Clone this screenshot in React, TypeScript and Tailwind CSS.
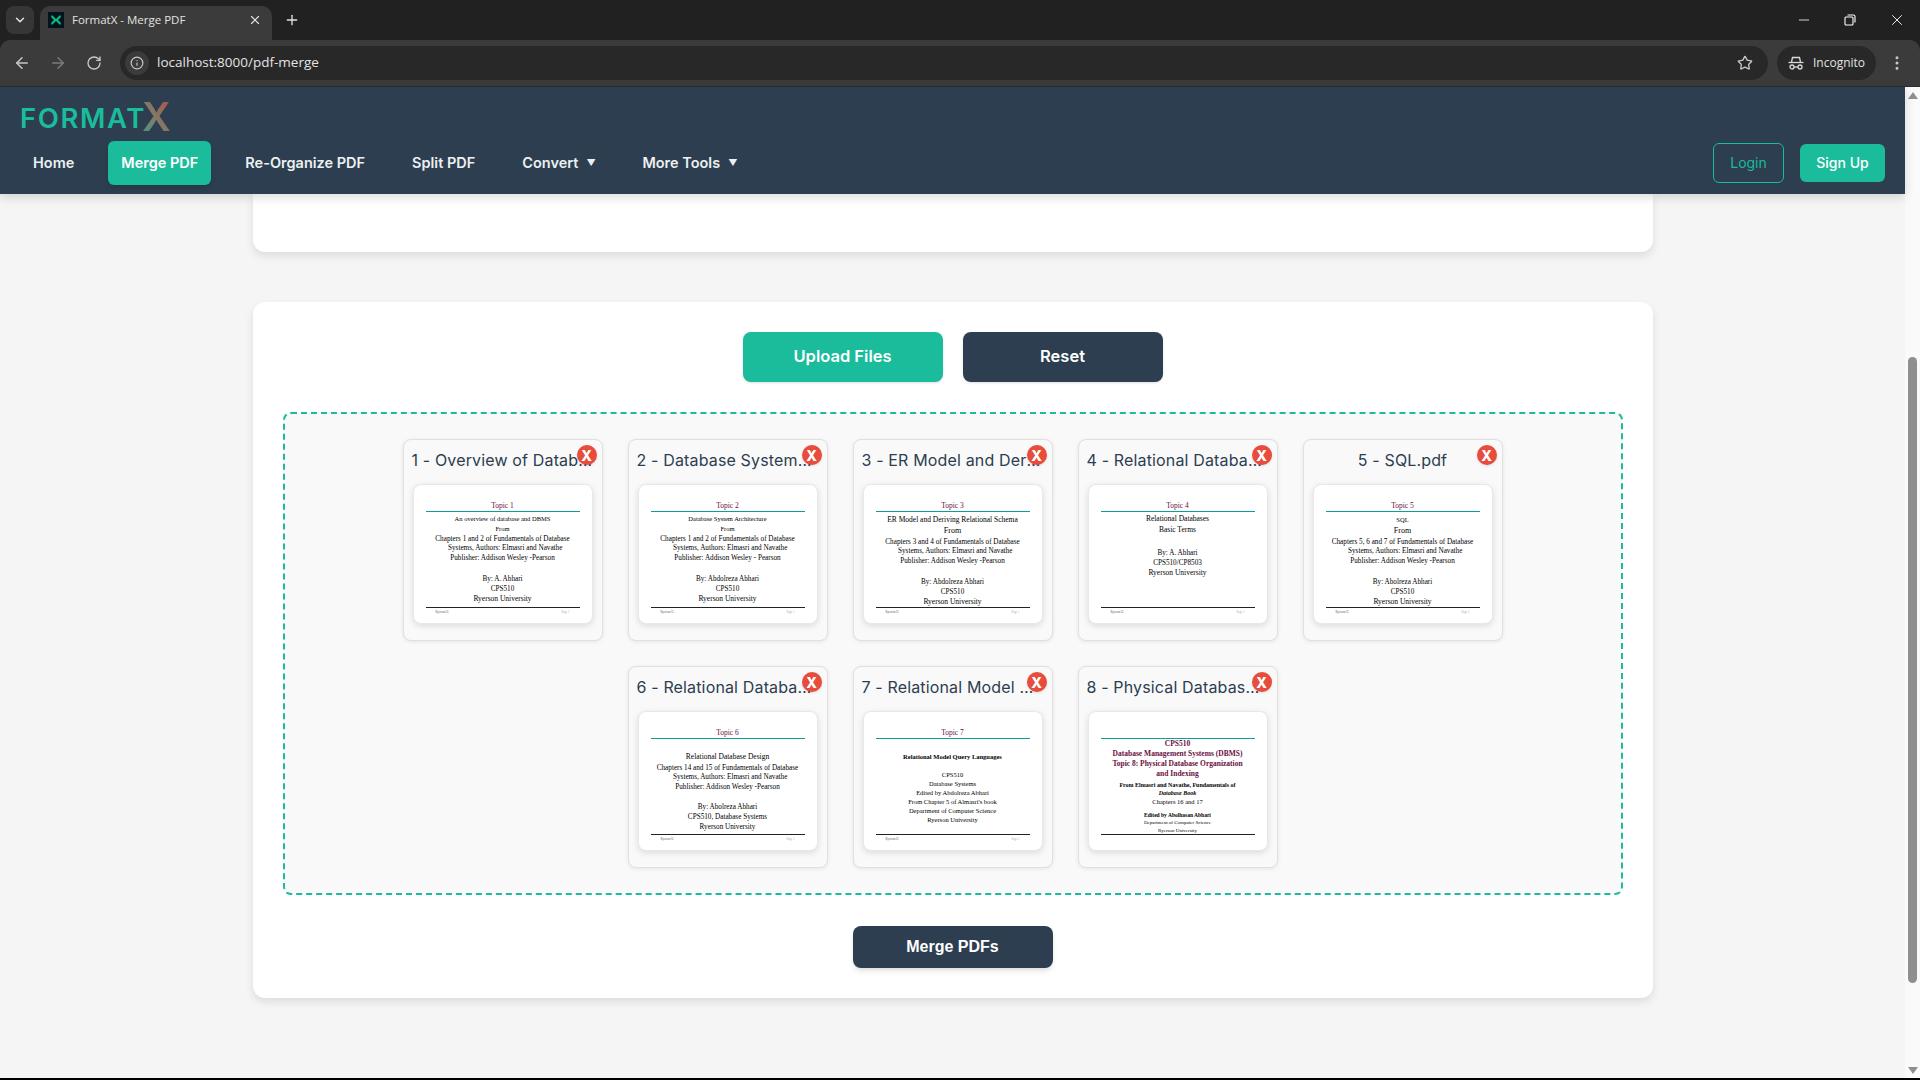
import clsx from 'clsx'
import { ArrowLeft, ArrowRight, ChevronDown, Info, Minus, MoreVertical, Plus, RotateCw, Star, X } from 'lucide-react'

type Line = [string, string]

interface Slide {
  file: string
  topic?: string
  lines: Line[]
  footer?: boolean
}

const small = 'text-[6.5px] leading-[10px]'
const body = 'text-[7.2px] leading-[10px]'
const tight = 'text-[7.2px] leading-[9px]'
const big = 'text-[7.5px] leading-[10px]'
const gap = 'h-[10px]'
const title = 'text-[7.5px] leading-[10px] font-bold text-[#6b0f3f]'

const slides: Slide[] = [
  {
    file: '1 - Overview of Database Systems.pdf',
    topic: 'Topic 1',
    lines: [
      ['', 'h-[2px]'],
      ['An overview of database and DBMS', small],
      ['From', small],
      ['Chapters 1 and 2 of Fundamentals of Database', body],
      ['\u00a0\u00a0\u00a0Systems, Authors: Elmasri and Navathe', tight],
      ['Publisher: Addison Wesley -Pearson', body],
      ['', 'h-[11px]'],
      ['By: A. Abhari', body],
      ['CPS510', body],
      ['Ryerson University', big],
    ],
  },
  {
    file: '2 - Database Systems Architecture.pdf',
    topic: 'Topic 2',
    lines: [
      ['', 'h-[2px]'],
      ['Database System Architecture', small],
      ['From', small],
      ['Chapters 1 and 2 of Fundamentals of Database', body],
      ['\u00a0\u00a0\u00a0Systems, Authors: Elmasri and Navathe', tight],
      ['Publisher: Addison Wesley - Pearson', body],
      ['', 'h-[11px]'],
      ['By: Abdolreza Abhari', body],
      ['CPS510', body],
      ['Ryerson University', big],
    ],
  },
  {
    file: '3 - ER Model and Deriving Relational Schema.pdf',
    topic: 'Topic 3',
    lines: [
      ['', 'h-[3px]'],
      ['ER Model and Deriving Relational Schema', big],
      ['From', 'text-[8px] leading-[12px]'],
      ['Chapters 3 and 4 of Fundamentals of Database', body],
      ['\u00a0\u00a0\u00a0Systems, Authors: Elmasri and Navathe', tight],
      ['Publisher: Addison Wesley -Pearson', body],
      ['', 'h-[11px]'],
      ['By: Abdolreza Abhari', body],
      ['CPS510', body],
      ['Ryerson University', big],
    ],
  },
  {
    file: '4 - Relational Database Basic Terms.pdf',
    topic: 'Topic 4',
    lines: [
      ['', 'h-[2px]'],
      ['Relational Databases', big],
      ['Basic Terms', 'text-[7.5px] leading-[12px]'],
      ['', 'h-[12px]'],
      ['By: A. Abhari', body],
      ['CPS510/CP8503', body],
      ['Ryerson University', big],
    ],
  },
  {
    file: '5 - SQL.pdf',
    topic: 'Topic 5',
    lines: [
      ['', 'h-[3px]'],
      ['SQL', small],
      ['From', 'text-[8px] leading-[12px]'],
      ['Chapters 5, 6 and 7 of Fundamentals of Database', body],
      ['\u00a0\u00a0\u00a0Systems, Authors: Elmasri and Navathe', tight],
      ['Publisher: Addison Wesley -Pearson', body],
      ['', 'h-[11px]'],
      ['By: Abolreza Abhari', body],
      ['CPS510', body],
      ['Ryerson University', big],
    ],
  },
  {
    file: '6 - Relational Database Design.pdf',
    topic: 'Topic 6',
    lines: [
      ['', 'h-[12px]'],
      ['Relational Database Design', 'text-[7.5px] leading-[12px]'],
      ['Chapters 14 and 15 of Fundamentals of Database', body],
      ['\u00a0\u00a0\u00a0Systems, Authors: Elmasri and Navathe', tight],
      ['Publisher: Addison Wesley -Pearson', body],
      ['', gap],
      ['By: Abolreza Abhari', body],
      ['CPS510, Database Systems', body],
      ['Ryerson University', body],
    ],
  },
  {
    file: '7 - Relational Model Query Languages.pdf',
    topic: 'Topic 7',
    lines: [
      ['', 'h-[13px]'],
      ['Relational Model Query Languages', 'text-[6.5px] leading-[10px] font-bold'],
      ['', 'h-[8px]'],
      ['CPS510', 'text-[6.5px] leading-[9px]'],
      ['Database Systems', 'text-[6.5px] leading-[9px]'],
      ['Edited by Abdolreza Abhari', 'text-[6.5px] leading-[9px]'],
      ["From Chapter 5 of Almasri's book", 'text-[6.5px] leading-[9px]'],
      ['Department of Computer Science', 'text-[6.5px] leading-[9px]'],
      ['Ryerson University', 'text-[6.5px] leading-[9px]'],
    ],
  },
  {
    file: '8 - Physical Database Organization.pdf',
    footer: false,
    lines: [
      ['CPS510', title],
      ['Database Management Systems (DBMS)', title],
      ['Topic 8: Physical Database Organization', title],
      ['and Indexing', title],
      ['', 'h-[2px]'],
      ['From Elmasri and Navathe, Fundamentals of', 'text-[6px] leading-[8px] font-bold'],
      ['Database Book', 'text-[6px] leading-[8px] italic font-bold'],
      ['Chapters 16 and 17', 'text-[6.5px] leading-[9px]'],
      ['', 'h-[5px]'],
      ['Edited by Abolhasan Abhari', 'text-[5.5px] leading-[8px] font-bold'],
      ['Department of Computer Science', 'text-[5px] leading-[8px]'],
      ['Ryerson University', 'text-[5px] leading-[7px]'],
    ],
  },
]

function Thumb({ slide }: { slide: Slide }) {
  return (
    <div className="w-[180px] h-[140px] mx-auto rounded-lg bg-white border border-[#e8e8e8] shadow-[0_2px_6px_rgba(0,0,0,0.12)] px-[12px] pt-[14px] font-['Liberation_Serif',serif] text-black overflow-hidden">
      <div className="h-[13px] flex items-end justify-center border-b border-[#0f9d9a] text-[7.5px] leading-[10px] text-[#6b0f3f]">
        {slide.topic ?? ''}
      </div>
      <div className="h-[95px] overflow-hidden text-center whitespace-nowrap">
        {slide.lines.map((l, i) => (
          <div key={i} className={l[1]}>{l[0]}</div>
        ))}
      </div>
      <div className="border-t border-[#222]">
        {slide.footer !== false && (
          <div className="flex justify-between px-[10px] text-[3px] leading-[8px] text-[#555]">
            <span>Ryerson U.</span>
            <span className="text-[#aaa]">Page 1</span>
          </div>
        )}
      </div>
    </div>
  )
}

function FileCard({ slide }: { slide: Slide }) {
  return (
    <div className="relative w-[200px] h-[202px] rounded-lg bg-[#f9f9f9] border border-[#e0e0e0] shadow-[0_1px_4px_rgba(0,0,0,0.08)] pt-2 px-2">
      <div className="truncate text-center text-base leading-6 tracking-[0.15px] text-[#2c3e50] mb-[12px]">{slide.file}</div>
      <Thumb slide={slide} />
      <div className="absolute top-[5px] right-[5px] w-5 h-5 rounded-full bg-[#e74c3c] flex items-center justify-center text-white text-[14px] font-extrabold shadow-sm">
        X
      </div>
    </div>
  )
}

function NavLink({ label, active, caret }: { label: string; active?: boolean; caret?: boolean }) {
  return (
    <div
      className={clsx(
        'h-11 px-[13px] flex items-center rounded-md text-[14.5px] font-semibold',
        active ? 'bg-[#1abc9c] text-white shadow-md' : 'text-[#ecf0f1]',
      )}
    >
      {label}
      {caret && <span className="ml-2 w-[9px] text-center text-[9px]">▼</span>}
    </div>
  )
}

function IncognitoIcon() {
  return (
    <svg width="16" height="14" viewBox="0 0 16 14" fill="none" stroke="#d8d8d8" strokeWidth="1.3">
      <path d="M3.5 6l1-4.5h7l1 4.5" />
      <path d="M0.5 6.5h15" />
      <circle cx="4" cy="11" r="2" />
      <circle cx="12" cy="11" r="2" />
      <path d="M6 11h4" />
    </svg>
  )
}

function BrowserChrome() {
  return (
    <div className="shrink-0 bg-[#202120] font-['Open_Sans',sans-serif]">
      <div className="h-10 flex items-end text-[#e3e3e3]">
        <div className="ml-[6px] mb-[6px] w-7 h-7 rounded-lg bg-[#363636] flex items-center justify-center">
          <ChevronDown size={14} strokeWidth={2.5} />
        </div>
        <div className="ml-[6px] w-[232px] h-[34px] rounded-t-[10px] bg-[#3b3b3b] flex items-center pl-2 pr-[10px] pb-[6px]">
          <svg width="16" height="16" viewBox="0 0 16 16" className="shrink-0">
            <rect width="16" height="16" fill="#04141f" />
            <path d="M4 3l4 4 4-4 1 2-3 3 3 3-1 2-4-4-4 4-1-2 3-3-3-3z" fill="#10b981" />
          </svg>
          <span className="ml-2 flex-1 text-[11.5px] truncate">FormatX - Merge PDF</span>
          <X size={14} />
        </div>
        <Plus size={16} className="ml-3 mb-3" />
        <div className="flex-1" />
        <div className="flex items-center mb-[11px] mr-[14px] gap-[30px] text-white">
          <Minus size={16} strokeWidth={1.2} />
          <svg width="16" height="16" viewBox="0 0 16 16" fill="none" stroke="white" strokeWidth="1.1">
            <rect x="3" y="5" width="8" height="8" rx="1" />
            <path d="M5.5 3h6a1.5 1.5 0 0 1 1.5 1.5v6" />
          </svg>
          <X size={18} strokeWidth={1.2} />
        </div>
      </div>
      <div className="h-[47px] bg-[#3b3b3b] rounded-t-[10px] border-b border-[#2b2f33] flex items-center text-[#c8c8c8] pl-[13px] pr-[12px] pb-px">
        <ArrowLeft size={18} />
        <ArrowRight size={18} className="ml-[18px] text-[#7c7c7c]" />
        <RotateCw size={16} className="ml-[19px]" />
        <div className="ml-[18px] h-[34px] w-[1648px] rounded-full bg-[#282828] flex items-center pl-[5px] pr-[15px]">
          <div className="w-6 h-6 rounded-full bg-[#3b3b3b] flex items-center justify-center">
            <Info size={14} />
          </div>
          <span className="ml-2 text-[13.5px] text-[#e3e3e3] flex-1">localhost:8000/pdf-merge</span>
          <Star size={16} />
        </div>
        <div className="ml-[9px] h-[34px] w-[99px] rounded-full bg-[#282828] flex items-center justify-center gap-[9px]">
          <IncognitoIcon />
          <span className="text-xs text-[#e3e3e3]">Incognito</span>
        </div>
        <MoreVertical size={18} className="ml-[12px]" />
      </div>
    </div>
  )
}

function NavBar() {
  return (
    <div className="relative z-10 h-[107px] shrink-0 bg-[#2c3e50] shadow-[0_3px_10px_rgba(0,0,0,0.15)]">
      <div className="h-[54px] pl-5 pt-[9px] flex items-center">
        <span className="text-[27.5px] font-semibold tracking-[1.6px] text-[#1abc9c] leading-none">FORMAT</span>
        <span className="-ml-[4px] text-[40px] font-semibold leading-none bg-linear-to-tr from-[#1abc9c] to-[#e74c3c] bg-clip-text text-transparent opacity-70 -translate-y-[2px]">
          X
        </span>
      </div>
      <div className="flex items-center pl-5 pr-5">
        <div className="flex items-center gap-[21px] flex-1">
          <NavLink label="Home" />
          <NavLink label="Merge PDF" active />
          <NavLink label="Re-Organize PDF" />
          <NavLink label="Split PDF" />
          <NavLink label="Convert" caret />
          <NavLink label="More Tools" caret />
        </div>
        <div className="w-[71px] h-10 rounded-md border border-[#1abc9c] flex items-center justify-center text-sm text-[#1abc9c]">
          Login
        </div>
        <div className="ml-4 w-[85px] h-[38px] rounded-md bg-[#1abc9c] flex items-center justify-center text-sm font-medium text-white">
          Sign Up
        </div>
      </div>
    </div>
  )
}

function Scrollbar() {
  return (
    <div className="w-[15px] shrink-0 bg-[#fafafa] flex flex-col items-center">
      <div className="mt-[5px] w-0 h-0 border-x-[5px] border-x-transparent border-b-[7px] border-b-[#8f8f8f]" />
      <div className="mt-[258px] w-[9px] h-[626px] rounded-full bg-[#8f8f8f]" />
      <div className="mt-[84px] w-0 h-0 border-x-[5px] border-x-transparent border-t-[7px] border-t-[#8f8f8f]" />
    </div>
  )
}

export default function App() {
  return (
    <div className="w-[1920px] h-[1080px] overflow-hidden bg-black flex flex-col font-['Inter',sans-serif]">
      <BrowserChrome />
      <div className="h-[991px] flex">
        <div className="flex-1 bg-[#f5f5f5] flex flex-col">
          <NavBar />
          <div className="w-[1400px] h-[58px] mx-auto shrink-0 bg-white rounded-b-xl shadow-[0_4px_8px_rgba(0,0,0,0.1)]" />
          <div className="w-[1400px] h-[696px] mx-auto mt-[50px] bg-white rounded-xl shadow-[0_4px_8px_rgba(0,0,0,0.1)] px-[30px] pt-[30px]">
            <div className="flex justify-center gap-5">
              <div className="w-[200px] h-[50px] pb-[2px] rounded-lg bg-[#1abc9c] shadow-sm flex items-center justify-center text-white text-[16.5px] font-semibold">
                Upload Files
              </div>
              <div className="w-[200px] h-[50px] pb-[2px] rounded-lg bg-[#2c3e50] shadow-sm flex items-center justify-center text-white text-[16.5px] font-semibold">
                Reset
              </div>
            </div>
            <div className="mt-[30px] h-[483px] rounded-lg border-2 border-dashed border-[#1abc9c] bg-[#f9f9f9] pt-[25px]">
              <div className="w-[1100px] mx-auto flex flex-wrap justify-center gap-x-[25px] gap-y-[25px]">
                {slides.map(s => (
                  <FileCard key={s.file} slide={s} />
                ))}
              </div>
            </div>
            <div className="mt-[31px] mx-auto w-[200px] h-[42px] rounded-lg bg-[#2c3e50] shadow-md flex items-center justify-center text-white text-base font-bold font-['Liberation_Sans',sans-serif]">
              Merge PDFs
            </div>
          </div>
        </div>
        <Scrollbar />
      </div>
    </div>
  )
}
